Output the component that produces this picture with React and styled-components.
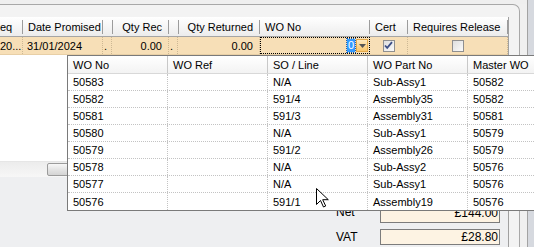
import React from 'react';
import styled, { createGlobalStyle } from 'styled-components';

// GLOBAL //
const GlobalStyle = createGlobalStyle`
  html, body { margin: 0; padding: 0; }
  body {
    font-family: "Liberation Sans", Arial, sans-serif;
    font-size: 11px;
    color: #000;
    background: #f0f0f0;
  }
  * { box-sizing: border-box; }
`;

const gridCols = '35px 80px 9px 57px 9px 82px 110px 38px 100px';

// CSS //
const Screen = styled.div`
  position: relative;
  width: 534px;
  height: 247px;
  overflow: hidden;
  display: flex;
  background: #f0f0f0;
`;

const Main = styled.div`
  width: 527px;
  display: flex;
  flex-direction: column;
`;

const RightStrip = styled.div`
  flex: 1;
  border-left: 1px solid #a3a3a3;
  background: #d6d9df;
`;

const TopGap = styled.div`
  height: 4px;
  background: #efefef;
`;

const Panel = styled.div`
  width: 520px;
  flex: 1;
  border-top: 1px solid #a8a8a8;
  border-right: 1px solid #a8a8a8;
  border-top-right-radius: 7px;
  background: #f3f3f3;
  padding-top: 12px;
  display: flex;
`;

const Body = styled.div`
  width: 509px;
  display: flex;
  flex-direction: column;
  border-right: 1px solid #a0a0a0;
`;

const Grid = styled.div`
  height: 160px;
  display: flex;
  flex-direction: column;
  background: #fff;
  overflow: hidden;
`;

const GridRow = styled.div`
  display: grid;
  grid-template-columns: ${gridCols};
  margin-left: -12px;
  width: 520px;
  height: ${({ $h }) => $h}px;
`;

const HeadRow = styled(GridRow)`
  background: linear-gradient(#ffffff, #f4f4f4 60%, #ececec);
  border-bottom: 1px solid #a5a5a5;
`;

const HeadCell = styled.div`
  position: relative;
  display: flex;
  align-items: center;
  justify-content: ${({ $align }) => ($align === 'right' ? 'flex-end' : 'flex-start')};
  padding: 0 ${({ $align }) => ($align === 'right' ? '7px' : '5px')} 0 ${({ $pl }) => $pl || 5}px;
  white-space: nowrap;
  overflow: hidden;
  &::after {
    content: '';
    position: absolute;
    right: 0;
    top: 3px;
    bottom: 2px;
    width: 1px;
    background: #9c9c9c;
  }
`;

const DataRow = styled(GridRow)`
  background: #f7dfb7;
  border-bottom: 1px solid #e8cfa6;
`;

const DataCell = styled.div`
  display: flex;
  align-items: center;
  justify-content: ${({ $align }) =>
    $align === 'right' ? 'flex-end' : $align === 'center' ? 'center' : 'flex-start'};
  padding: 0 ${({ $align }) => ($align === 'right' ? '6px' : '4px')} 0 ${({ $pl }) => $pl || 4}px;
  border-right: 1px dotted #cdb894;
  white-space: nowrap;
  overflow: hidden;
`;

const EditCell = styled.div`
  display: flex;
  align-items: center;
  justify-content: flex-end;
  border: 1px dotted #000;
  padding-right: 1px;
  gap: 1px;
`;

const Selected = styled.span`
  background: #3399ff;
  color: #fff;
  line-height: 13px;
  padding: 0 1px;
  outline: 1px dotted #1a5fb4;
`;

const DropButton = styled.div`
  width: 12px;
  height: 13px;
  display: flex;
  align-items: center;
  justify-content: center;
  background: linear-gradient(#fde8bf, #f9c76e);
  border: 1px solid #e4a94a;
`;

const Check = styled.div`
  width: 12px;
  height: 12px;
  border: 1px solid #8f8f8f;
  background: linear-gradient(135deg, #dedede, #fafafa);
  display: flex;
  align-items: center;
  justify-content: center;
`;

const GridFill = styled.div`
  flex: 1;
  background: #fff;
`;

const HScroll = styled.div`
  height: 16px;
  border-top: 1px solid #e6e6e6;
  background: linear-gradient(#ececec, #f7f7f7);
  padding: 1px 0 1px 47px;
  display: flex;
`;

const Thumb = styled.div`
  width: 60px;
  border: 1px solid #9b9b9b;
  border-radius: 2px;
  background: linear-gradient(#f7f7f7, #e4e4e4 50%, #d4d4d4);
`;

const Totals = styled.div`
  flex: 1;
  background: #eeeff1;
  padding: 26px 0 0 336px;
  display: flex;
  flex-direction: column;
  gap: 6px;
`;

const TotalRow = styled.div`
  display: grid;
  grid-template-columns: 44px 120px;
  align-items: ${({ $top }) => ($top ? 'start' : 'center')};
  height: ${({ $h }) => $h || 16}px;
  font-size: 12px;
`;

const Label = styled.span`
  padding-top: ${({ $pt }) => $pt || 0}px;
`;

const AmountBox = styled.div`
  height: ${({ $h }) => $h || 16}px;
  border: 1px solid #7c7c7c;
  background: #fdf3e3;
  text-align: right;
  padding: ${({ $pt }) => $pt || 0}px 1px 0 0;
  line-height: 14px;
  font-size: 12px;
`;

// dropdown list overlay
const Popup = styled.div`
  position: absolute;
  left: 67px;
  top: 55px;
  width: 502px;
  border: 1px solid #7a7a7a;
  background: #fff;
`;

const ListRow = styled.div`
  display: grid;
  grid-template-columns: repeat(5, 100px);
  height: 17px;
  border-bottom: 1px dotted #c3c3c3;
  &:last-child { border-bottom: none; }
`;

const ListHead = styled(ListRow)`
  background: linear-gradient(#ffffff, #f3f3f3);
  border-bottom: 1px solid #d8d8d8;
  height: 18px;
`;

const ListCell = styled.div`
  display: flex;
  align-items: center;
  padding-left: 5px;
  border-right: 1px ${({ $head }) => ($head ? 'solid #c8c8c8' : 'dotted #c3c3c3')};
  white-space: nowrap;
`;

const Cursor = styled.svg`
  position: absolute;
  left: 316px;
  top: 188px;
`;

// DATA //
const woRows = [
  ['50583', '', 'N/A', 'Sub-Assy1', '50582'],
  ['50582', '', '591/4', 'Assembly35', '50582'],
  ['50581', '', '591/3', 'Assembly31', '50581'],
  ['50580', '', 'N/A', 'Sub-Assy1', '50579'],
  ['50579', '', '591/2', 'Assembly26', '50579'],
  ['50578', '', 'N/A', 'Sub-Assy2', '50576'],
  ['50577', '', 'N/A', 'Sub-Assy1', '50576'],
  ['50576', '', '591/1', 'Assembly19', '50576'],
];

const listHeads = ['WO No', 'WO Ref', 'SO / Line', 'WO Part No', 'Master WO'];

// COMPONENT //
const App = () => (
  <>
    <GlobalStyle />
    <Screen>
      <Main>
        <TopGap />
        <Panel>
          <Body>
            <Grid>
              <HeadRow $h={20}>
                <HeadCell $pl={12}>eq</HeadCell>
                <HeadCell>Date Promised</HeadCell>
                <HeadCell />
                <HeadCell $align="right">Qty Rec</HeadCell>
                <HeadCell />
                <HeadCell $align="right">Qty Returned</HeadCell>
                <HeadCell>WO No</HeadCell>
                <HeadCell>Cert</HeadCell>
                <HeadCell>Requires Release</HeadCell>
              </HeadRow>
              <DataRow $h={18}>
                <DataCell $pl={12}>20...</DataCell>
                <DataCell>31/01/2024</DataCell>
                <DataCell $pl={1}>.</DataCell>
                <DataCell $align="right">0.00</DataCell>
                <DataCell $pl={1}>.</DataCell>
                <DataCell $align="right">0.00</DataCell>
                <EditCell>
                  <Selected>0</Selected>
                  <DropButton>
                    <svg width="7" height="4" viewBox="0 0 7 4">
                      <path d="M0 0h7L3.5 4z" fill="#555" />
                    </svg>
                  </DropButton>
                </EditCell>
                <DataCell $align="center">
                  <Check>
                    <svg width="9" height="9" viewBox="0 0 9 9">
                      <path d="M1 4.5l2.2 2.4L8 1.2" stroke="#3d4f86" strokeWidth="1.8" fill="none" />
                    </svg>
                  </Check>
                </DataCell>
                <DataCell $align="center">
                  <Check />
                </DataCell>
              </DataRow>
              <GridFill />
              <HScroll>
                <Thumb />
              </HScroll>
            </Grid>
            <Totals>
              <TotalRow $h={20} $top>
                <Label $pt={2}>Net</Label>
                <AmountBox $h={20} $pt={2}>£144.00</AmountBox>
              </TotalRow>
              <TotalRow>
                <Label>VAT</Label>
                <AmountBox>£28.80</AmountBox>
              </TotalRow>
            </Totals>
          </Body>
        </Panel>
      </Main>
      <RightStrip />

      <Popup>
        <ListHead>
          {listHeads.map((h) => (
            <ListCell key={h} $head>{h}</ListCell>
          ))}
        </ListHead>
        {woRows.map((r) => (
          <ListRow key={r[0]}>
            {r.map((v, i) => (
              <ListCell key={i}>{v}</ListCell>
            ))}
          </ListRow>
        ))}
      </Popup>

      <Cursor width="13" height="20" viewBox="0 0 13 20">
        <path d="M0.5 0.5v16l4-4 3 6.5 2.2-1-3-6.3h5.6z" fill="#fff" stroke="#000" strokeWidth="1" />
      </Cursor>
    </Screen>
  </>
);

export default App;
